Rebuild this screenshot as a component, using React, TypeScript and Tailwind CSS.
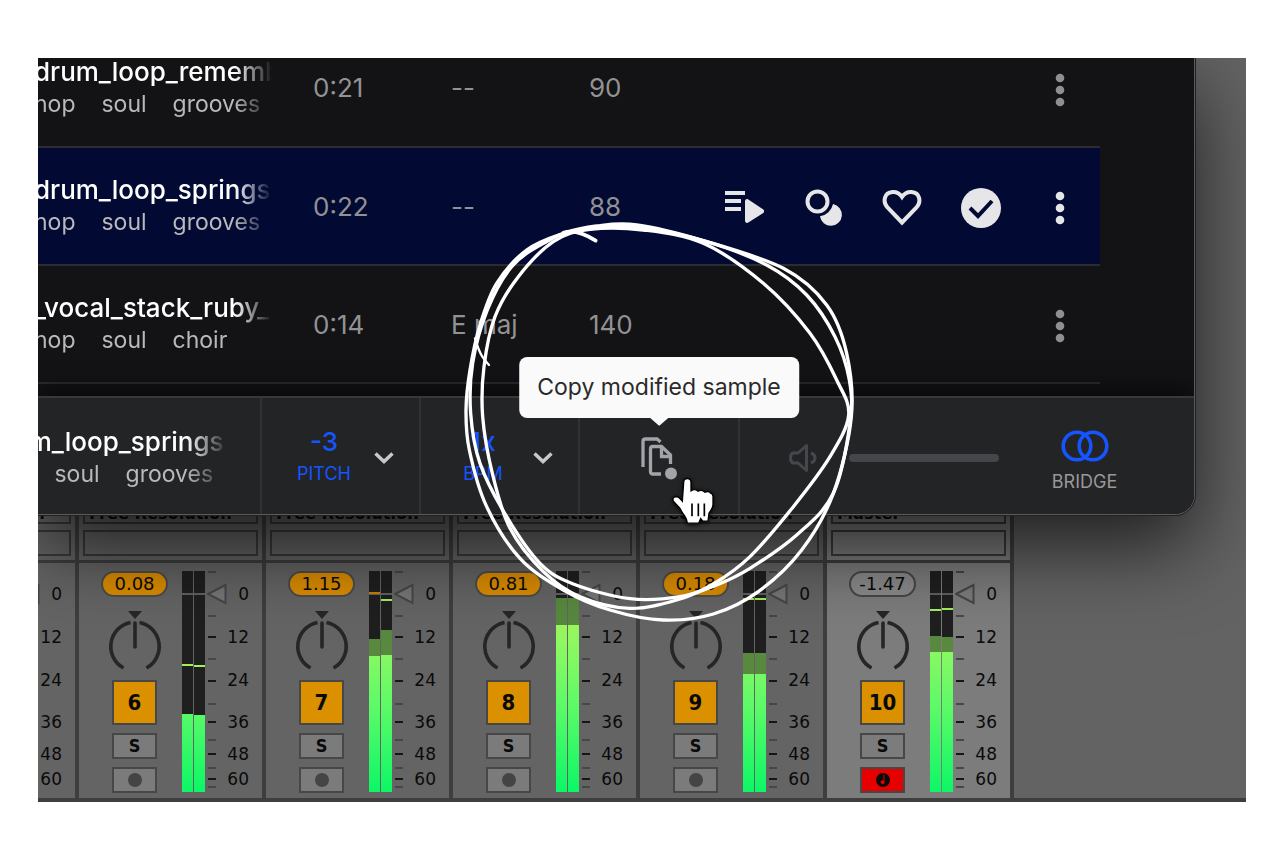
import { useState } from "react";

type Sample = {
  name: string;
  tags: string[];
  time: string;
  musicalKey: string;
  bpm: string;
  active?: boolean;
};

type Meter = {
  peak?: number;
  peakColor?: string;
  rms: number;
  level: number;
};

type Track = {
  label: string;
  input: string;
  gain: string;
  meters: [Meter, Meter];
  master?: boolean;
};

const SAMPLES: Sample[] = [
  { name: "drum_loop_rememb", tags: ["hop", "soul", "grooves"], time: "0:21", musicalKey: "--", bpm: "90" },
  { name: "drum_loop_springs", tags: ["hop", "soul", "grooves"], time: "0:22", musicalKey: "--", bpm: "88", active: true },
  { name: "_vocal_stack_ruby_", tags: ["hop", "soul", "choir"], time: "0:14", musicalKey: "E maj", bpm: "140" },
];

const TRACKS: Track[] = [
  { label: "6", input: "Free Resolution", gain: "0.08", meters: [{ peak: 94, rms: 143, level: 143 }, { peak: 95, rms: 144, level: 144 }] },
  { label: "7", input: "Free Resolution", gain: "1.15", meters: [{ peak: 22, peakColor: "#c98000", rms: 68, level: 85 }, { peak: 29, rms: 59, level: 84 }] },
  { label: "8", input: "Free Resolution", gain: "0.81", meters: [{ rms: 27, level: 54 }, { rms: 27, level: 54 }] },
  { label: "9", input: "Free Resolution", gain: "0.18", meters: [{ peak: 28, rms: 82, level: 103 }, { peak: 28, rms: 82, level: 103 }] },
  { label: "10", input: "Master", gain: "-1.47", master: true, meters: [{ peak: 39, rms: 65, level: 81 }, { peak: 38, rms: 66, level: 81 }] },
];

const TICKS = [
  { y: 1 }, { y: 45 }, { y: 66, strong: true }, { y: 88 }, { y: 110, strong: true }, { y: 133 },
  { y: 151, strong: true }, { y: 169 }, { y: 183, strong: true }, { y: 197 }, { y: 208, strong: true }, { y: 216 },
];

/* Scribble around the copy button, one list of points per turn of the pen */
const LOOPS: number[][][] = [
  [[620, 45], [820, 92], [1060, 175], [1190, 285], [1250, 430], [1264, 620], [1210, 850], [1115, 1020], [985, 1145], [850, 1212], [700, 1230], [540, 1200], [400, 1140], [270, 1045], [170, 890], [118, 720], [108, 600], [120, 480], [150, 345], [200, 220], [290, 120], [400, 70], [500, 48]],
  [[640, 60], [820, 100], [1000, 220], [1140, 370], [1220, 510], [1256, 615], [1200, 740], [1090, 890], [960, 1040], [850, 1122], [740, 1170], [600, 1195], [450, 1160], [340, 1085], [240, 955], [187, 790], [158, 620], [162, 470], [195, 320], [265, 200], [370, 95], [480, 58]],
  [[630, 52], [830, 95], [1010, 165], [1130, 255], [1215, 380], [1258, 510], [1260, 640], [1210, 850], [1100, 975], [960, 1075], [860, 1125], [750, 1160], [600, 1166], [430, 1122], [330, 1060], [230, 920], [150, 760], [122, 610], [128, 460], [172, 300], [245, 170], [340, 100], [440, 62]],
];

function smoothPath(points: number[][]) {
  const n = points.length;
  let d = `M${points[0][0]} ${points[0][1]}`;
  for (let i = 0; i < n; i++) {
    const [p0, p1, p2, p3] = [-1, 0, 1, 2].map((k) => points[(i + k + n) % n]);
    d += `C${p1[0] + (p2[0] - p0[0]) / 6} ${p1[1] + (p2[1] - p0[1]) / 6} ${p2[0] - (p3[0] - p1[0]) / 6} ${p2[1] - (p3[1] - p1[1]) / 6} ${p2[0]} ${p2[1]}`;
  }
  return d + "Z";
}

/* ---------- icons ---------- */

function QueueIcon() {
  return (
    <svg viewBox="0 0 40 40" className="size-10" fill="currentColor">
      <path d="M1 3h20v4H1zM1 11h16v4H1zM1 19h16v4H1z" />
      <path d="M21 13.5c0-2 1.500-3 3.300-2l15 10c1.500 1 1.500 2.500 0 3.500l-15 9.500c-1.800 1-3.300 0-3.300-2z" />
    </svg>
  );
}

function SimilarIcon() {
  return (
    <svg viewBox="0 0 40 40" className="size-10">
      <circle cx="14.5" cy="13.5" r="10" fill="none" stroke="currentColor" strokeWidth="4" />
      <path d="M30 16a11 11 0 1 1-13 12.300 15.500 15.500 0 0 0 13-12.300z" fill="currentColor" />
    </svg>
  );
}

function HeartIcon() {
  return (
    <svg viewBox="0 0 40 40" className="size-10" fill="none" stroke="currentColor" strokeWidth="4">
      <path d="M20 34.500 5.500 19.500C.5 14 2 4.500 10.500 4 15 3.700 18 6 20 9c2-3 5-5.300 9.500-5C38 4.500 39.500 14 34.500 19.500z" />
    </svg>
  );
}

function CheckIcon() {
  return (
    <svg viewBox="0 0 40 40" className="size-10">
      <circle cx="20" cy="20" r="20" fill="currentColor" />
      <path d="m9 20 8 8 14-15" fill="none" stroke="#020a33" strokeWidth="4" />
    </svg>
  );
}

function MoreIcon() {
  return (
    <svg viewBox="0 0 40 40" className="size-10" fill="currentColor">
      <circle cx="20" cy="8" r="4.3" />
      <circle cx="20" cy="20" r="4.3" />
      <circle cx="20" cy="32" r="4.3" />
    </svg>
  );
}

function ChevronIcon() {
  return (
    <svg viewBox="0 0 20 12" className="h-3 w-5" fill="none" stroke="currentColor" strokeWidth="3.5">
      <path d="m1.500 1.500 8.500 8 8.500-8" />
    </svg>
  );
}

function CopyIcon() {
  return (
    <svg viewBox="0 0 40 46" className="h-[46px] w-10" fill="none" stroke="currentColor" strokeWidth="3.3">
      <path d="M4 32V6.500Q4 4 6.500 4H18l3.500 3" />
      <path d="M22 39h-8q-2.500 0-2.500-2.500V14q0-2.500 2.500-2.500h8.500l9 8.500v9" />
      <path d="M22.500 12v9.500H31" />
      <circle cx="32" cy="38.5" r="6" fill="currentColor" stroke="none" />
    </svg>
  );
}

function SpeakerIcon() {
  return (
    <svg viewBox="0 0 28 30" className="h-[30px] w-7 shrink-0" fill="none" stroke="currentColor" strokeWidth="3" strokeLinejoin="round">
      <path d="M17.500 2.500v25L9 20H4q-2.500-1-2.500-5T4 10h5z" />
      <path d="M22 10q4 1.500 4 5t-4 5" />
    </svg>
  );
}

function BridgeIcon() {
  return (
    <svg viewBox="0 0 48 32" className="h-8 w-12" fill="none" stroke="currentColor" strokeWidth="3.6">
      <circle cx="16" cy="16" r="13.8" />
      <circle cx="32" cy="16" r="13.8" />
    </svg>
  );
}

function HandCursor() {
  return (
    <svg viewBox="150 165 150 155" className="pointer-events-none absolute top-[417px] left-[630px] h-[52px] w-[50px] drop-shadow-[0_1px_2px_rgba(0,0,0,.9)]">
      <path
        d="M197 186q0-11 11-11t11 11v26q12-8 21 1 12-6 21 3 12-5 17 3 8 3 7 12v22q0 10-12 26l-3 24h-16l-6-8-6 14h-34q-2-14-8-22-8-10-14-22l-20-22q-4-12 8-14 8 0 19 14z"
        fill="#fff"
        stroke="#000"
        strokeWidth="4"
      />
      <path d="M222 250v38M241 250v38M259 250v38" stroke="#000" strokeWidth="5" />
    </svg>
  );
}

/* ---------- browser window ---------- */

function SampleRow({ sample }: { sample: Sample }) {
  return (
    <tr
      className={
        sample.active
          ? "h-[118px] border-b-2 border-[#2b2c30] bg-[#020a33] text-[#e6e6e8]"
          : "h-[118px] border-b-2 border-[#2b2c30] text-[#8f8f91]"
      }
    >
      <td className="w-[275px] p-0">
        <div className="w-[234px] overflow-hidden whitespace-nowrap [mask-image:linear-gradient(to_right,black_84%,transparent)]">
          <div className="-ml-1">
            <div className="text-[26px] leading-8 font-medium text-white">{sample.name}</div>
            <div className="flex gap-[26px] text-[23px] leading-8 text-[#b9b9bb]">
              {sample.tags.map((tag) => (
                <span key={tag}>{tag}</span>
              ))}
            </div>
          </div>
        </div>
      </td>
      <td className="w-[138px] p-0 text-[26px] text-[#929294]">{sample.time}</td>
      <td className="w-[138px] p-0 text-[26px] text-[#929294]">{sample.musicalKey}</td>
      <td className="w-[126px] p-0 text-[26px] text-[#929294]">{sample.bpm}</td>
      <td className="p-0 pr-5">
        <div className="flex justify-end gap-[39px] pt-1">
          {sample.active && (
            <>
              <button aria-label="Play next"><QueueIcon /></button>
              <button aria-label="Find similar"><SimilarIcon /></button>
              <button aria-label="Like"><HeartIcon /></button>
              <button aria-label="Downloaded"><CheckIcon /></button>
            </>
          )}
          <button aria-label="More"><MoreIcon /></button>
        </div>
      </td>
    </tr>
  );
}

function ValuePicker({ value, label }: { value: string; label: string }) {
  return (
    <button className="flex w-[159px] shrink-0 items-center gap-4 border-l-2 border-[#303135] pt-1 pl-7">
      <span className="w-[68px] text-center font-medium text-[#1554ff]">
        <span className="block text-[26px] leading-8">{value}</span>
        <span className="block text-lg leading-8 font-normal">{label}</span>
      </span>
      <span className="text-[#c8c8ca]">
        <ChevronIcon />
      </span>
    </button>
  );
}

function PlayerBar() {
  const [volume, setVolume] = useState(100);

  return (
    <div className="relative flex h-[118px] border-t-2 border-[#37383b] bg-[#232426] shadow-[0_-6px_20px_rgba(0,0,0,.6)]">
      <div className="flex w-[222px] shrink-0 items-center pt-1">
        <div className="w-[190px] overflow-hidden whitespace-nowrap [mask-image:linear-gradient(to_right,black_78%,transparent)]">
          <div className="-ml-[51px]">
            <div className="text-[26px] leading-8 font-medium text-white">drum_loop_springs</div>
            <div className="flex gap-[26px] text-[23px] leading-8 text-[#b9b9bb]">
              <span>hop</span>
              <span>soul</span>
              <span>grooves</span>
            </div>
          </div>
        </div>
      </div>

      <ValuePicker value="-3" label="PITCH" />
      <ValuePicker value="1x" label="BPM" />

      <div className="relative flex w-40 shrink-0 items-center justify-center border-l-2 border-[#303135] pt-1">
        <button aria-label="Copy modified sample" className="text-[#a3a4a9]">
          <CopyIcon />
        </button>
        <div
          role="tooltip"
          className="absolute bottom-full left-1/2 mb-[-20px] -translate-x-1/2 rounded-lg bg-[#fafafa] px-[18px] text-[23px] leading-[61px] whitespace-nowrap text-[#2a2a2c]"
        >
          Copy modified sample
          <svg viewBox="0 0 18 8" className="absolute top-full left-1/2 -ml-[9px] h-2 w-[18px]" fill="#fafafa">
            <path d="M0 0h18l-8 7q-1 1-2 0z" />
          </svg>
        </div>
      </div>

      <div className="flex flex-1 items-center gap-8 border-l-2 border-[#303135] pt-1 pl-[49px] text-[#46474c]">
        <SpeakerIcon />
        <input
          type="range"
          aria-label="Volume"
          value={volume}
          onChange={(e) => setVolume(Number(e.target.value))}
          className="h-2 w-0 min-w-0 flex-1 appearance-none rounded-full bg-[#45464b] [&::-webkit-slider-thumb]:appearance-none"
        />
      </div>

      <button className="flex w-[195px] shrink-0 flex-col items-center justify-center gap-1 pt-4 pr-6 text-[#1554ff]">
        <BridgeIcon />
        <span className="text-lg leading-8 text-[#98989a]">BRIDGE</span>
      </button>
    </div>
  );
}

function BrowserWindow() {
  return (
    <section className="relative z-10 mr-[51px] overflow-hidden rounded-br-[20px] border-r border-b border-[#5a5b5e] bg-[#131315] font-[Inter,sans-serif] shadow-[0_0_0_1px_#202020,0_30px_80px_rgba(0,0,0,.7)]">
      <div className="overflow-hidden pr-[94px] pb-3">
        <table className="-mt-[29px] w-full table-fixed">
          <tbody>
            {SAMPLES.map((sample) => (
              <SampleRow key={sample.name} sample={sample} />
            ))}
          </tbody>
        </table>
      </div>
      <PlayerBar />
    </section>
  );
}

/* ---------- mixer ---------- */

function PanKnob() {
  return (
    <svg viewBox="0 0 54 64" className="mt-3 h-16 w-[54px]" fill="none" stroke="#262626" strokeWidth="3.6">
      <path d="M20 2h14l-7 8z" fill="#262626" stroke="none" />
      <path d="M22.500 13.500A24.500 24.500 0 0 0 15.500 59M31.500 13.500A24.500 24.500 0 0 1 38.500 59" />
      <path d="M27 14v24" strokeLinecap="round" />
    </svg>
  );
}

function LevelMeter({ track }: { track: Track }) {
  const gradient = `level-${track.label}`;

  return (
    <svg viewBox="0 0 23 221" className="h-[221px] w-[23px] shrink-0">
      <defs>
        <linearGradient id={gradient} gradientUnits="userSpaceOnUse" x1="0" y1="50" x2="0" y2="221">
          <stop offset="0" stopColor="#a0f75f" />
          <stop offset="0.5" stopColor="#5dfa68" />
          <stop offset="1" stopColor="#0cf766" />
        </linearGradient>
      </defs>
      {track.meters.map((meter, i) => (
        <g key={i} transform={i === 0 ? "translate(0 0)" : "translate(12 0)"}>
          <rect width="11" height="221" fill="#1f1f1f" />
          <rect y={meter.rms} width="11" height={221 - meter.rms} fill="#58893f" />
          <rect y={meter.level} width="11" height={221 - meter.level} fill={`url(#${gradient})`} />
          <rect y="22" width="11" height="2" fill="#606060" />
          {meter.peak !== undefined && (
            <rect y={meter.peak - 1} width="11" height="2" fill={meter.peakColor ?? "#a2f05a"} />
          )}
        </g>
      ))}
    </svg>
  );
}

function DbScale({ master }: { master?: boolean }) {
  return (
    <div className="flex shrink-0 pr-[13px]">
      <svg viewBox="0 0 20 221" className="h-[221px] w-5">
        {TICKS.map((tick) => (
          <rect key={tick.y} x="1" y={tick.y - 1} width="8" height="2" fill={tick.strong ? "#161616" : "#474747"} />
        ))}
        <path d="M1 23 18.500 14v18z" fill={master ? "none" : "#767676"} stroke="#474747" strokeWidth="2" />
      </svg>
      <div className="flex w-[22px] flex-col items-end font-['DejaVu_Sans',sans-serif] text-[17px]">
        <span className="leading-[46px]">0</span>
        <span className="leading-[41px]">12</span>
        <span className="leading-[45px]">24</span>
        <span className="leading-[38px]">36</span>
        <span className="leading-[26px]">48</span>
        <span className="leading-[25px]">60</span>
      </div>
    </div>
  );
}

function TrackStrip({ track, cut }: { track: Track; cut?: boolean }) {
  return (
    <div
      className={
        cut
          ? "flex w-[41px] shrink-0 justify-end overflow-hidden border-r-4 border-[#3e3e3e]"
          : "flex w-[187px] shrink-0 justify-end overflow-hidden border-r-4 border-[#3e3e3e]"
      }
    >
      <div className={track.master ? "w-[183px] shrink-0 bg-[#7c7c7c]" : "w-[183px] shrink-0 bg-[#646464]"}>
        <div className="border-b-[3px] border-[#3e3e3e] px-1 pb-1">
          <div className="mb-1.5 h-[26px] border-2 border-[#3a3a3a] px-1 text-lg leading-[26px] font-bold">{track.input}</div>
          <div className="h-[26px] border-2 border-[#3a3a3a]" />
        </div>
        <div className="flex pt-2 pb-[5px] pl-[22px]">
          <div className="mr-3.5 flex w-[67px] flex-col items-center">
            <div
              className={
                track.master
                  ? "w-full rounded-full border-2 border-[#474747] bg-[#8a8a8a] text-center font-['DejaVu_Sans',sans-serif] text-lg leading-[22px]"
                  : "w-full rounded-full border-2 border-[#4d4d4d] bg-[#db8c00] text-center font-['DejaVu_Sans',sans-serif] text-lg leading-[22px]"
              }
            >
              {track.gain}
            </div>
            <PanKnob />
            <button className="mt-[7px] h-[45px] w-[45px] border-2 border-[#474747] bg-[#db9000] text-[22px] leading-[41px] font-bold">
              {track.label}
            </button>
            <button
              aria-label="Solo"
              className={
                track.master
                  ? "mt-2 h-[26px] w-[45px] border-2 border-[#474747] text-lg leading-[22px] font-bold"
                  : "mt-2 h-[26px] w-[45px] border-2 border-[#474747] bg-white/15 text-lg leading-[22px] font-bold"
              }
            >
              S
            </button>
            <button
              aria-label="Arm recording"
              className={
                track.master
                  ? "mt-2 flex h-[26px] w-[45px] items-center justify-center border-2 border-[#474747] bg-[#e60000]"
                  : "mt-2 flex h-[26px] w-[45px] items-center justify-center border-2 border-[#474747] bg-white/15"
              }
            >
              <svg viewBox="0 0 14 14" className="size-3.5">
                <circle cx="7" cy="7" r="7" fill={track.master ? "#0a0a0a" : "#444"} />
                {track.master && <path d="M7.500 2v5.500H5.500A2 2 0 1 0 8.500 10V2z" fill="#e60000" />}
              </svg>
            </button>
          </div>
          <LevelMeter track={track} />
          <div className="ml-0.5 flex">
            <DbScale master={track.master} />
          </div>
        </div>
      </div>
    </div>
  );
}

function Mixer() {
  return (
    <section className="-mt-[17px] flex border-b-4 border-[#3e3e3e] font-['DejaVu_Sans_Condensed','DejaVu_Sans',sans-serif] text-[#0a0a0a]">
      <TrackStrip track={{ ...TRACKS[0], label: "5" }} cut />
      {TRACKS.map((track) => (
        <TrackStrip key={track.label} track={track} />
      ))}
    </section>
  );
}

export default function App() {
  return (
    <main className="min-h-screen bg-white pt-[58px] pr-[34px] pb-[59px] pl-[38px]">
      <div className="relative overflow-hidden bg-[#636363]">
        <BrowserWindow />
        <Mixer />

        {/* Annotation */}
        <svg
          viewBox="0 0 1290 1260"
          className="pointer-events-none absolute top-[152px] left-[392px] z-20 h-[420px] w-[430px]"
          fill="none"
          stroke="#fff"
          strokeWidth="10"
          strokeLinecap="round"
        >
          {LOOPS.map((loop, i) => (
            <path key={i} d={smoothPath(loop)} />
          ))}
          <path d="M400 68q40-12 97 24" strokeWidth="11" />
          <path d="M135 385q12 40 22 55t20 25" strokeWidth="7" />
        </svg>

        <div className="absolute top-0 left-0 z-30">
          <HandCursor />
        </div>
      </div>
    </main>
  );
}
